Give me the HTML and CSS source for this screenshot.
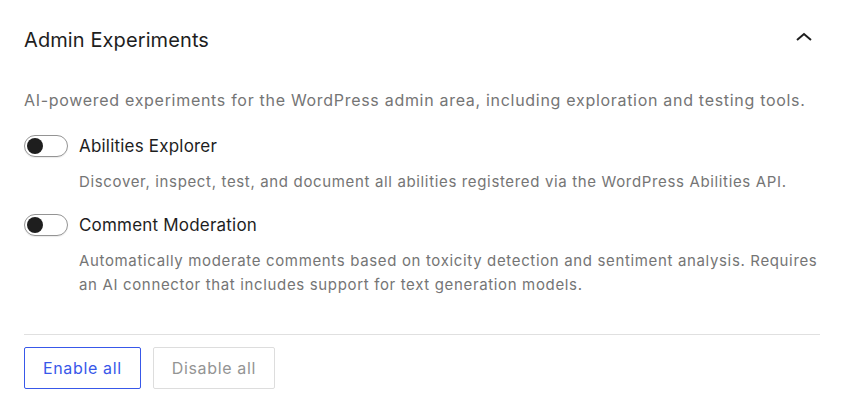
FILE: index.html
```html
<!DOCTYPE html>
<html lang="en">
<head>
    <meta charset="UTF-8">
    <meta name="viewport" content="width=device-width, initial-scale=1.0">
    <title>Admin Experiments</title>
    <link rel="stylesheet" href="styles.css">
</head>
<body>

<section class="panel">
    <div class="panel-header">
        <h2>Admin Experiments</h2>
        <button class="collapse-btn" aria-label="Collapse">
            <svg width="24" height="24" viewBox="0 0 24 24"><polyline points="5,15 12,9 19,15"/></svg>
        </button>
    </div>

    <p class="panel-desc">AI-powered experiments for the WordPress admin area, including exploration and testing tools.</p>

    <div class="option">
        <label class="toggle-row">
            <span class="toggle"><span class="thumb"></span></span>
            <span class="toggle-label">Abilities Explorer</span>
        </label>
        <p class="help">Discover, inspect, test, and document all abilities registered via the WordPress Abilities API.</p>
    </div>

    <div class="option">
        <label class="toggle-row">
            <span class="toggle"><span class="thumb"></span></span>
            <span class="toggle-label">Comment Moderation</span>
        </label>
        <p class="help">Automatically moderate comments based on toxicity detection and sentiment analysis. Requires<br>an AI connector that includes support for text generation models.</p>
    </div>

    <div class="panel-footer">
        <button class="btn btn-primary">Enable all</button>
        <button class="btn btn-disabled" disabled>Disable all</button>
    </div>
</section>

</body>
</html>
```

FILE: styles.css
```css
* {
    margin: 0;
    padding: 0;
    box-sizing: border-box;
}

body {
    background: #fff;
    font-family: Inter, "Noto Sans", sans-serif;
    color: #1e1e1e;
}

.panel {
    padding: 0 25px 0 24px;
}

.panel-header {
    height: 80px;
    display: flex;
    align-items: center;
    justify-content: space-between;
}

.panel-header h2 {
    font-size: 20px;
    font-weight: 400;
    letter-spacing: 0.1px;
    color: #1e1e1e;
}

.collapse-btn {
    background: none;
    border: none;
    width: 24px;
    height: 24px;
    margin-right: 4px;
    margin-top: -6px;
    cursor: pointer;
}

.collapse-btn svg {
    display: block;
    fill: none;
    stroke: #1e1e1e;
    stroke-width: 2;
}

.panel-desc {
    margin-top: 8px;
    font-size: 16px;
    line-height: 24px;
    letter-spacing: 0.7px;
    color: #757575;
    white-space: nowrap;
}

.option {
    margin-top: 22px;
}

.option + .option {
    margin-top: 19px;
}

.toggle-row {
    display: flex;
    align-items: center;
    gap: 11px;
    height: 24px;
}

.toggle {
    width: 44px;
    height: 22px;
    border: 1px solid #949494;
    border-radius: 11px;
    position: relative;
    box-shadow: 0 1px 1px rgba(0, 0, 0, 0.08);
}

.thumb {
    position: absolute;
    top: 2px;
    left: 2px;
    width: 16px;
    height: 16px;
    border-radius: 50%;
    background: #1e1e1e;
}

.toggle-label {
    font-size: 17px;
    letter-spacing: 0.2px;
    color: #1e1e1e;
}

.help {
    margin-top: 12px;
    padding-left: 55px;
    font-size: 15px;
    line-height: 24px;
    letter-spacing: 0.65px;
    color: #757575;
    white-space: nowrap;
}

.panel-footer {
    margin-top: 37px;
    border-top: 1px solid #e0e0e0;
    padding-top: 12px;
    display: flex;
    gap: 12px;
}

.btn {
    height: 42px;
    padding: 0 18px;
    font-family: inherit;
    font-size: 16px;
    letter-spacing: 0.65px;
    border-radius: 2px;
    background: #fff;
}

.btn-primary {
    border: 1px solid #3858e9;
    color: #3858e9;
    cursor: pointer;
}

.btn-disabled {
    border: 1px solid #dddddd;
    color: #949494;
}
```
